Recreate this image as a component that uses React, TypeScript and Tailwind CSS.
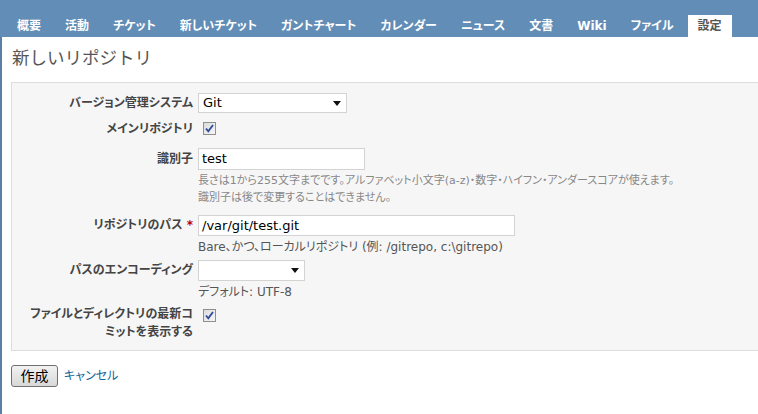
const tabs = ["概要", "活動", "チケット", "新しいチケット", "ガントチャート", "カレンダー", "ニュース", "文書", "Wiki", "ファイル", "設定"];

const font = "font-['DejaVu_Sans','Noto_Sans_CJK_JP',sans-serif] [font-feature-settings:'palt']";

function Select({ value, width }: { value: string; width: string }) {
  return (
    <div className={`relative h-[20px] ${width} border border-[#d3d3d3] bg-white`}>
      <span className="absolute left-[4px] top-[1px] text-[13px] leading-[16px] text-black">{value}</span>
      <svg className="absolute right-[5px] top-[7px]" width="8" height="5" viewBox="0 0 8 5">
        <path d="M0 0h8L4 5z" fill="#111" />
      </svg>
    </div>
  );
}

function Check() {
  return (
    <div className="ml-[5px] flex h-[13px] w-[13px] items-center justify-center border border-[#8e8f8f] bg-gradient-to-br from-[#dcdcdc] to-[#f6f6f6]">
      <svg width="9" height="9" viewBox="0 0 9 9">
        <path d="M1 4.5l2.3 2.8L8 1" fill="none" stroke="#2b4a9c" strokeWidth="1.8" />
      </svg>
    </div>
  );
}

function Label({ children, top = "" }: { children: React.ReactNode; top?: string }) {
  return (
    <div className={`w-[181px] shrink-0 text-right text-[12px] font-bold text-[#444] ${top}`}>{children}</div>
  );
}

export default function App() {
  return (
    <div className={`h-[414px] w-[758px] overflow-hidden bg-white ${font}`}>
      {/* header */}
      <div className="flex h-[37px] items-end bg-[#628db6] pl-[7px]">
        <div className="flex gap-[4px]">
          {tabs.map((t) => (
            <div
              key={t}
              className={`flex h-[22px] items-center px-[10px] text-[12px] font-bold ${
                t === "設定" ? "bg-white text-[#555]" : "text-white"
              }`}
            >
              {t}
            </div>
          ))}
        </div>
      </div>

      <div className="flex">
        <div className="h-[377px] w-[2px] bg-[#5b7ea4]" />
        <div className="flex-1 pl-[9px]">
          <h2 className="mt-[10px] h-[22px] pl-[1px] text-[17.5px] leading-[22px] text-[#555] [font-feature-settings:normal]">新しいリポジトリ</h2>

          {/* form box */}
          <div className="mt-[13px] border-y border-l border-[#dddddd] bg-[#f6f6f6] pt-[10px] pb-[9px]">
            <div className="flex items-center">
              <Label>バージョン管理システム</Label>
              <div className="ml-[5px]">
                <Select value="Git" width="w-[149px]" />
              </div>
            </div>

            <div className="mt-[9px] flex h-[13px] items-center">
              <Label>メインリポジトリ</Label>
              <div className="ml-[5px]"><Check /></div>
            </div>

            <div className="mt-[13px] flex">
              <Label top="leading-[22px]">識別子</Label>
              <div className="ml-[5px]">
                <div className="h-[22px] w-[167px] border border-[#d3d3d3] bg-white pl-[3px] text-[13px] leading-[20px] text-black">test</div>
                <div className="mt-[2px] text-[11px] leading-[17px] text-[#888]">
                  長さは1から255文字までです。アルファベット小文字(a-z)・数字・ハイフン・アンダースコアが使えます。
                  <br />
                  識別子は後で変更することはできません。
                </div>
              </div>
            </div>

            <div className="mt-[9px] flex">
              <Label top="leading-[21px]">
                リポジトリのパス <span className="text-[#bb0000]">*</span>
              </Label>
              <div className="ml-[5px]">
                <div className="h-[21px] w-[317px] border border-[#d3d3d3] bg-white pl-[3px] text-[13px] leading-[19px] text-black">/var/git/test.git</div>
                <div className="mt-[3px] text-[12px] leading-[16px] text-[#555]">Bare、かつ、ローカルリポジトリ (例: /gitrepo, c:\gitrepo)</div>
              </div>
            </div>

            <div className="mt-[5px] flex">
              <Label top="leading-[21px]">パスのエンコーディング</Label>
              <div className="ml-[5px]">
                <Select value="" width="w-[107px] h-[21px]" />
                <div className="mt-[3px] text-[12px] leading-[16px] text-[#555]">デフォルト: UTF-8</div>
              </div>
            </div>

            <div className="mt-[5px] flex">
              <Label top="leading-[18px] pl-[12px]">ファイルとディレクトリの最新コミットを表示する</Label>
              <div className="ml-[5px] pt-[4px]"><Check /></div>
            </div>
          </div>

          <div className="mt-[14px] flex items-center">
            <button className="h-[22px] w-[47px] rounded-[3px] border border-[#707070] bg-gradient-to-b from-[#f2f2f2] to-[#d8d8d8] text-[14px] leading-[20px] text-black">
              作成
            </button>
            <a className="ml-[6px] text-[12px] text-[#116699]">キャンセル</a>
          </div>
        </div>
      </div>
    </div>
  );
}
